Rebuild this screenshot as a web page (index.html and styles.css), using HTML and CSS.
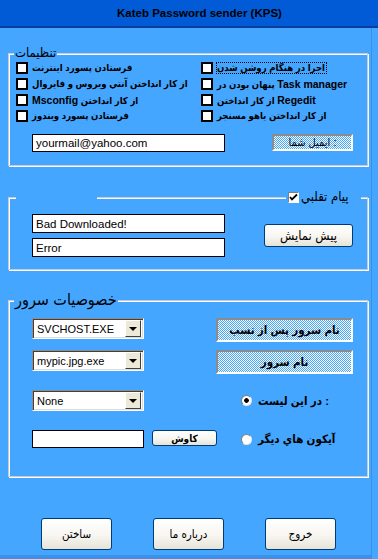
FILE: index.html
```html
<!DOCTYPE html>
<html>
<head>
<meta charset="utf-8">
<link rel="stylesheet" href="styles.css">
</head>
<body>
<div class="window">
  <div class="titlebar"><span class="title">Kateb Password sender (KPS)</span></div>
  <div class="client">
    <section class="group g1">
      <span class="legend legend-1">تنظیمات</span>
      <div class="checks">
        <label class="chk"><span class="box"></span><span>فرستادن پسورد اینترنت</span></label>
        <label class="chk"><span class="box"></span><span class="focus">اجرا در هنگام روشن شدن</span></label>
        <label class="chk"><span class="box"></span><span>از کار انداختن آنتي ويروس و فايروال</span></label>
        <label class="chk"><span class="box"></span><span>پنهان بودن در <b class="lat">Task manager</b></span></label>
        <label class="chk"><span class="box"></span><span><b class="lat">Msconfig</b> از کار انداختن</span></label>
        <label class="chk"><span class="box"></span><span>از کار انداختن <b class="lat">Regedit</b></span></label>
        <label class="chk"><span class="box"></span><span>فرستادن پسورد ويندوز</span></label>
        <label class="chk"><span class="box"></span><span>از کار انداختن یاهو مسنجر</span></label>
      </div>
      <div class="email-row">
        <span class="textbox email">yourmail@yahoo.com</span>
        <span class="dither email-btn">ایمیل شما :</span>
      </div>
    </section>

    <section class="group g2">
      <span class="mask"></span>
      <div class="legend legend-2">
        <span class="cb3d"><svg width="9" height="9" viewBox="0 0 9 9"><path d="M1 4 L3 6.5 L8 1.5" fill="none" stroke="#000" stroke-width="1.8"/></svg></span>
        <span class="lg2-text">پیام تقلبي</span>
      </div>
      <div class="stack">
        <span class="textbox tb2">Bad Downloaded!</span>
        <span class="textbox tb2">Error</span>
      </div>
      <span class="xpbtn preview">پیش نمایش</span>
    </section>

    <section class="group g3">
      <span class="legend legend-3">خصوصیات سرور</span>
      <div class="row3 ra">
        <div class="combo"><span>SVCHOST.EXE</span><span class="arrow"></span></div>
        <span class="dither srvbtn">نام سرور پس از نسب</span>
      </div>
      <div class="row3 rb">
        <div class="combo"><span>mypic.jpg.exe</span><span class="arrow"></span></div>
        <span class="dither srvbtn">نام سرور</span>
      </div>
      <div class="row3 rc">
        <div class="combo"><span>None</span><span class="arrow"></span></div>
        <label class="opt"><span class="radio on"></span><span>در این لیست :</span></label>
      </div>
      <div class="row3 rd">
        <div class="browse">
          <span class="textbox tb3"></span>
          <span class="xpbtn kavosh">کاوش</span>
        </div>
        <label class="opt"><span class="radio"></span><span>آیکون هاي دیگر</span></label>
      </div>
    </section>

    <div class="actions">
      <span class="xpbtn big">ساختن</span>
      <span class="xpbtn big">درباره ما</span>
      <span class="xpbtn big">خروج</span>
    </div>
  </div>
</div>
</body>
</html>
```

FILE: styles.css
```css
* { box-sizing: border-box; }
html, body { margin: 0; padding: 0; }
body {
  width: 378px;
  height: 559px;
  overflow: hidden;
  background: #45a6ff;
  font-family: "Liberation Sans", "DejaVu Sans Condensed", "DejaVu Sans", sans-serif;
  font-size: 11px;
  color: #000;
}
.window {
  width: 378px;
  height: 559px;
  background: #45a6ff;
  display: flex;
  flex-direction: column;
  box-shadow: inset 0 -4px 0 #3b91ea;
}
.titlebar {
  height: 28px;
  flex: none;
  background: #025bd6;
  border-bottom: 2px solid #0b3d9e;
  display: flex;
  align-items: center;
  justify-content: center;
  padding-left: 21px;
}
.title { font-weight: bold; font-size: 11.5px; }
.client {
  flex: 1;
  padding-left: 8px;
  display: flex;
  flex-direction: column;
  box-shadow: inset -6px 0 0 #45a6ff, inset -7px 0 0 #3a8fe6;
}
.group {
  position: relative;
  width: 360px;
  border: 1px solid #c6ccd2;
  box-shadow: inset 1px 1px 0 #fff, 1px 1px 0 #fff;
}
.legend {
  position: absolute;
  background: #45a6ff;
  white-space: nowrap;
}
.legend-1 { left: 5px; top: -9px; padding: 0 1px; font-size: 13px; line-height: 16px; }
.legend-2 {
  left: 277px; top: -8px; width: 75px; height: 14px;
  padding-left: 2px;
  display: grid;
  grid-template-columns: 11px 1fr;
  column-gap: 2px;
  align-items: center;
  direction: ltr;
  font-size: 13px; line-height: 14px;
}
.lg2-text { grid-column: 2; grid-row: 1; }
.legend-2 .cb3d { grid-column: 1; grid-row: 1; }
.legend-3 { left: 5px; top: -11px; padding: 0 1px; font-size: 16px; line-height: 19px; }
.mask {
  position: absolute;
  left: 7px; top: -1px;
  width: 81px; height: 2px;
  background: #45a6ff;
}

/* group 1 */
.g1 { margin-top: 25px; padding: 8px 0 13px 7px; }
.checks {
  display: grid;
  grid-template-columns: 185px 1fr;
  row-gap: 4px;
}
.chk {
  display: flex;
  align-items: center;
  gap: 4px;
  height: 12px;
  font-weight: bold;
  font-size: 9.5px;
  white-space: nowrap;
  line-height: 12px;
}
.lat { font-size: 10.5px; }
.box {
  width: 12px; height: 12px; flex: none;
  border: 2px solid #000;
  background: #fff;
}
.focus {
  margin-left: -1px;
  border: 1px dotted #000;
  line-height: 10px;
  height: 12px;
  padding-right: 1px;
}
.email-row {
  display: flex;
  align-items: flex-start;
  margin-top: 12px;
  padding-left: 16px;
}
.textbox {
  display: flex;
  align-items: center;
  background: #fff;
  border: 1px solid #000;
  padding-left: 3px;
  font-size: 11.5px;
  white-space: nowrap;
}
.email { width: 193px; height: 18px; }
.dither {
  display: flex;
  align-items: center;
  justify-content: center;
  background: repeating-conic-gradient(#fff 0 25%, #45a6ff 0 50%) 0 0 / 2px 2px;
  border: 2px solid;
  border-color: #8c8c8c #fff #fff #8c8c8c;
  white-space: nowrap;
}
.email-btn { width: 81px; height: 17px; margin-left: 47px; font-size: 11px; }

/* group 2 */
.g2 {
  margin-top: 31px;
  padding: 16px 0 12px 23px;
  display: flex;
  align-items: center;
}
.cb3d {
  width: 11px; height: 11px;
  background: #fff;
  border: 1px solid;
  border-color: #808080 #fff #fff #808080;
  display: flex; align-items: center; justify-content: center;
}
.stack { display: flex; flex-direction: column; gap: 5px; }
.tb2 { width: 193px; height: 19px; }
.xpbtn {
  display: flex;
  align-items: center;
  justify-content: center;
  border: 1px solid #003c74;
  border-radius: 3px;
  background: linear-gradient(#ffffff, #f7f6f1 55%, #e6e3d8);
  white-space: nowrap;
}
.preview { margin-left: 39px; width: 89px; height: 23px; font-size: 13px; }

/* group 3 */
.g3 { margin-top: 30px; padding: 17px 0 28px 23px; }
.row3 {
  display: grid;
  grid-template-columns: 185px 1fr;
  align-items: center;
}
.ra { align-items: start; height: 24px; }
.rb { align-items: start; height: 24px; margin-top: 8px; }
.rc { height: 21px; margin-top: 16px; }
.rd { height: 18px; margin-top: 19px; }
.combo {
  width: 112px; height: 21px;
  display: flex;
  align-items: center;
  justify-content: space-between;
  background: #fff;
  border: 1px solid;
  border-color: #8c8c8c #fff #fff #8c8c8c;
  box-shadow: inset 1px 1px 0 #404040, inset -1px -1px 0 #dcdcdc;
  padding: 0 2px 0 4px;
  font-size: 11px;
}
.arrow {
  width: 16px; height: 17px;
  background: #ece9d8;
  border: 1px solid;
  border-color: #fff #404040 #404040 #fff;
  display: flex; align-items: center; justify-content: center;
}
.arrow::after {
  content: "";
  border-left: 4px solid transparent;
  border-right: 4px solid transparent;
  border-top: 4px solid #000;
}
.srvbtn {
  width: 137px; height: 24px; margin-left: -1px;
  font-size: 11.5px; font-weight: bold;
}
.opt {
  display: flex;
  align-items: center;
  gap: 6px;
  margin-left: 24px;
  font-weight: bold;
  font-size: 11.5px;
  white-space: nowrap;
}
.radio {
  width: 11px; height: 11px; flex: none;
  border-radius: 50%;
  background: #fff;
  border: 1px solid;
  border-color: #808080 #e8e8e8 #e8e8e8 #808080;
}
.radio.on { background: radial-gradient(circle, #000 0 2px, #fff 2.6px); }
.browse { display: flex; align-items: flex-start; gap: 8px; }
.tb3 { width: 112px; height: 18px; }
.kavosh { width: 65px; height: 16px; font-weight: bold; font-size: 10px; }

/* bottom */
.actions {
  display: flex;
  gap: 41px;
  padding-left: 33px;
  margin-top: 41px;
}
.big { width: 71px; height: 32px; font-size: 11.5px; }
```
